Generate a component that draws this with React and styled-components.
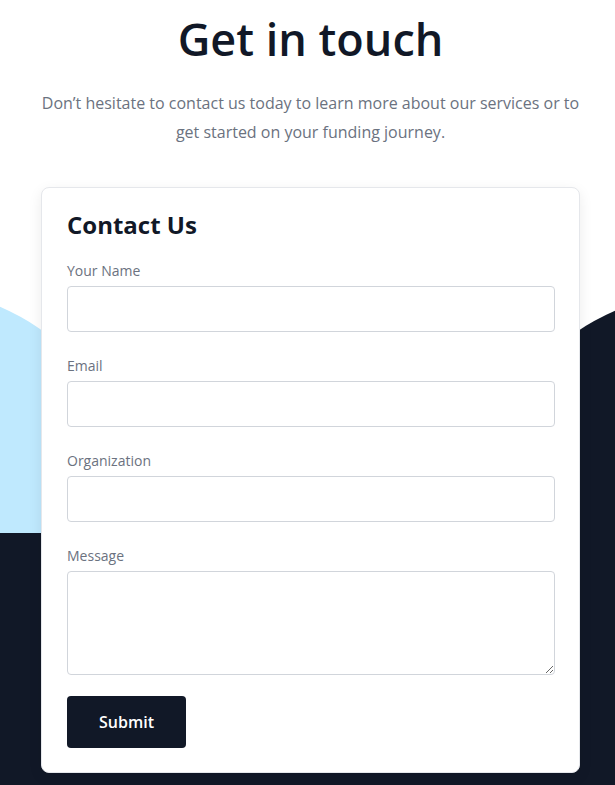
import React from 'react'
import styled, { createGlobalStyle } from 'styled-components'

const GlobalStyle = createGlobalStyle`
  body {
    margin: 0;
    background: #ffffff;
    font-family: "Open Sans", "Noto Sans", Arial, sans-serif;
  }
  * { box-sizing: border-box; }
`

const Section = styled.section`
  position: relative;
  overflow: hidden;
  padding: 10px 35px 40px 41px;
`

const Blob = styled.div`
  position: absolute;
  width: 500px;
  height: 500px;
  border-radius: 50%;
  top: ${p => p.top}px;
  left: ${p => p.left}px;
  background: ${p => p.color};
  z-index: 0;
`

const DarkBand = styled.div`
  position: absolute;
  left: 0;
  right: 0;
  top: 533px;
  bottom: 0;
  background: #111827;
  z-index: 0;
`

const Content = styled.div`
  position: relative;
  z-index: 1;
  display: flex;
  flex-direction: column;
  align-items: center;
`

const Title = styled.h1`
  margin: 0;
  font-size: 45px;
  line-height: 57px;
  font-weight: 600;
  color: #111827;
  text-align: center;
`

const Lead = styled.p`
  margin: 22px 0 0;
  font-size: 16px;
  line-height: 29px;
  color: #6b7280;
  text-align: center;
`

const Card = styled.form`
  margin-top: 40px;
  width: 100%;
  background: #ffffff;
  border: 1px solid #e5e7eb;
  border-radius: 8px;
  box-shadow: 0 4px 14px rgba(0, 0, 0, 0.08);
  padding: 21px 24px 24px 25px;
  display: flex;
  flex-direction: column;
`

const CardTitle = styled.h2`
  margin: 0 0 20px;
  font-size: 24px;
  line-height: 32px;
  font-weight: 700;
  color: #111827;
`

const Field = styled.label`
  display: flex;
  flex-direction: column;
  gap: 5px;
  margin-bottom: 24px;
`

const Label = styled.span`
  font-size: 14px;
  line-height: 20px;
  color: #6b7280;
`

const Input = styled.input`
  display: block;
  width: 100%;
  height: 46px;
  border: 1px solid #d1d5db;
  border-radius: 4px;
  padding: 0 12px;
  font: inherit;
  background: #fff;
`

const TextArea = styled.textarea`
  display: block;
  width: 100%;
  height: 104px;
  border: 1px solid #d1d5db;
  border-radius: 4px;
  padding: 8px 12px;
  font: inherit;
  background: #fff;
`

const Submit = styled.button`
  align-self: flex-start;
  margin-top: -3px;
  height: 52px;
  padding: 0 32px;
  border: none;
  border-radius: 4px;
  background: #111827;
  color: #ffffff;
  font-family: inherit;
  font-size: 16px;
  font-weight: 600;
  cursor: pointer;
`

const fields = ['Your Name', 'Email', 'Organization']

export default function App() {
  return (
    <>
      <GlobalStyle />
      <Section>
        <Blob color="#bfe9fe" left={-350} top={286} />
        <Blob color="#111827" left={465} top={290} />
        <DarkBand />
        <Content>
          <Title>Get in touch</Title>
          <Lead>
            Don’t hesitate to contact us today to learn more about our services or to
            <br />
            get started on your funding journey.
          </Lead>
          <Card onSubmit={e => e.preventDefault()}>
            <CardTitle>Contact Us</CardTitle>
            {fields.map(f => (
              <Field key={f}>
                <Label>{f}</Label>
                <Input type="text" />
              </Field>
            ))}
            <Field>
              <Label>Message</Label>
              <TextArea />
            </Field>
            <Submit type="submit">Submit</Submit>
          </Card>
        </Content>
      </Section>
    </>
  )
}
